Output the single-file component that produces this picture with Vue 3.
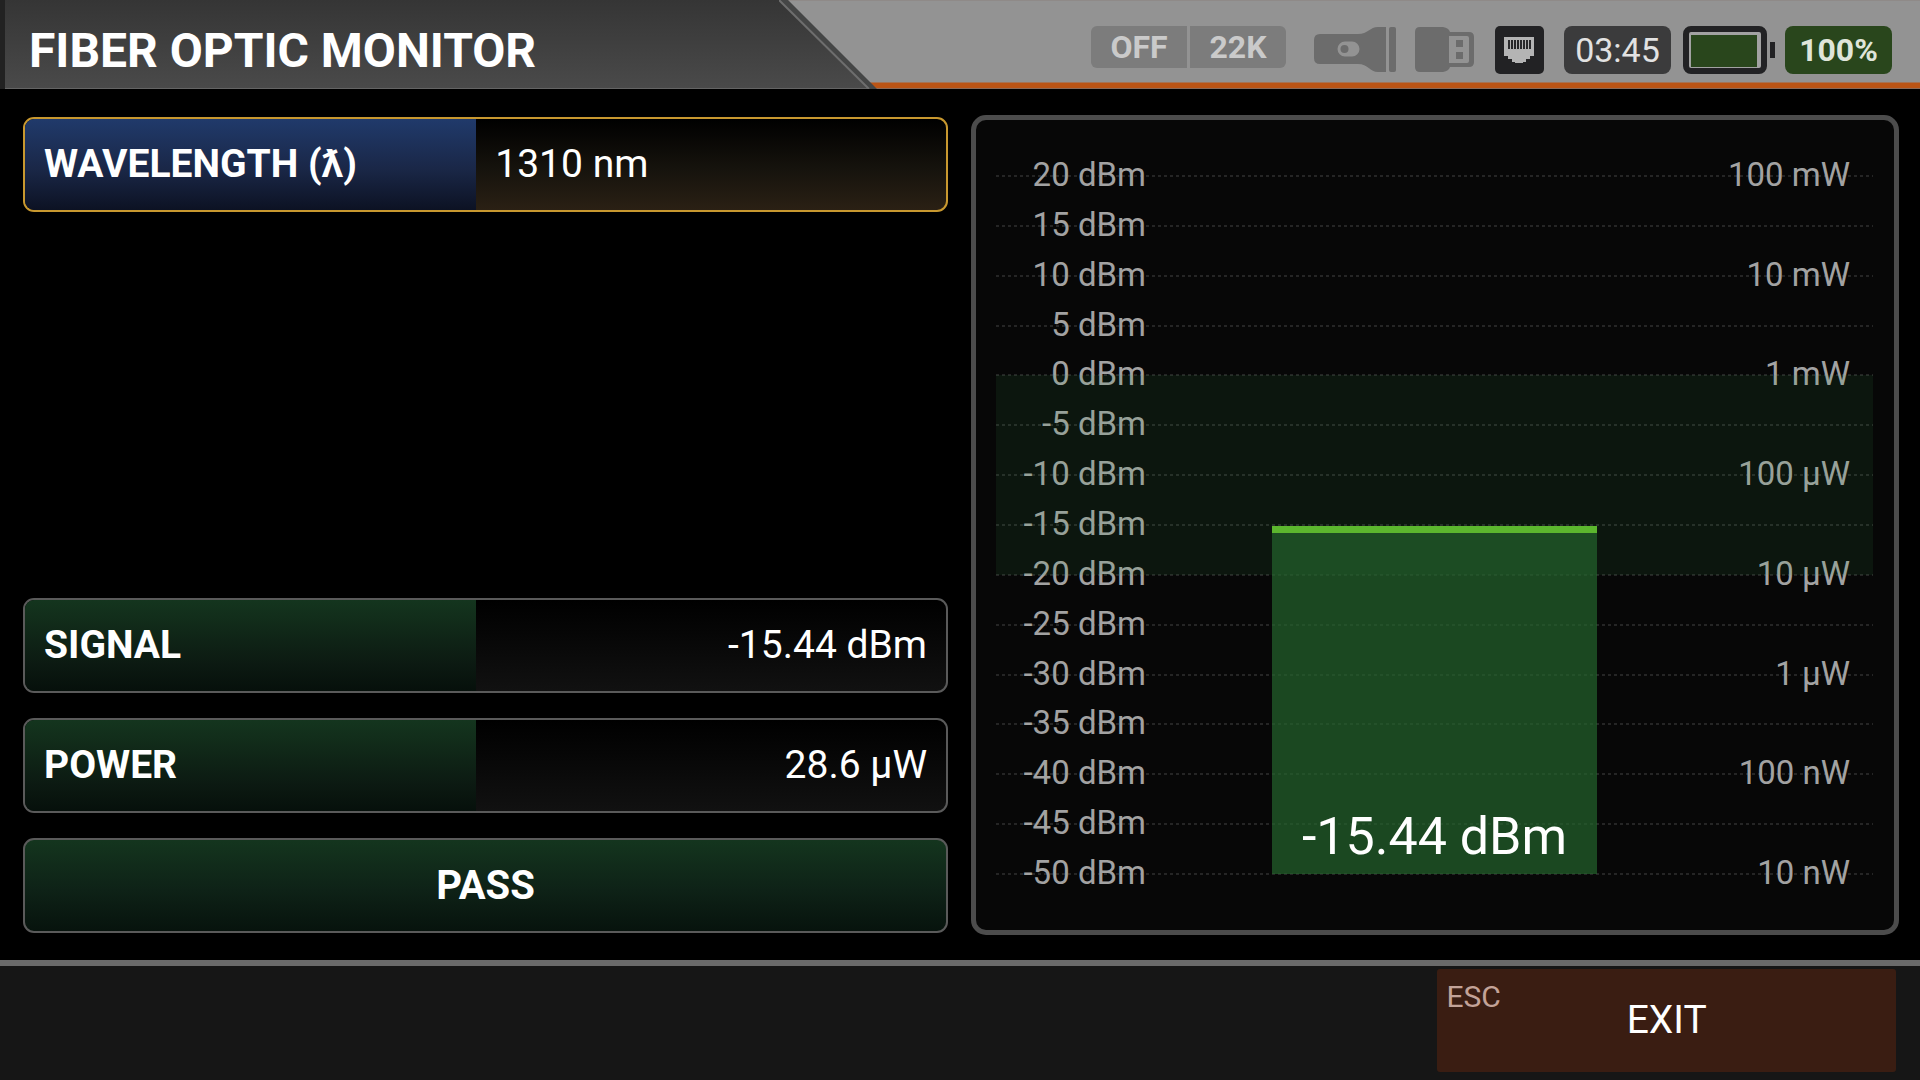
<script setup>
import { ref, computed } from 'vue'

const wavelength = ref('1310 nm')
const signal = -15.44
const signalText = `${signal} dBm`
const powerText = '28.6 µW'

const powerLabels = {
  20: '100 mW',
  10: '10 mW',
  0: '1 mW',
  '-10': '100 µW',
  '-20': '10 µW',
  '-30': '1 µW',
  '-40': '100 nW',
  '-50': '10 nW'
}

const levels = Array.from({ length: 15 }, (_, i) => {
  const dbm = 20 - i * 5
  return { dbm, power: powerLabels[dbm] }
})

// Each level owns one equal row; its value sits on the row's centre line.
const position = (dbm) => (((20 - dbm) / 5 + 0.5) / levels.length) * 100

const bandStyle = computed(() => ({
  top: `${position(0)}%`,
  height: `${position(-20) - position(0)}%`
}))

const barStyle = computed(() => ({
  top: `${position(signal)}%`,
  bottom: `${100 - position(-50)}%`
}))
</script>

<template>
  <div class="screen">
    <header class="topbar">
      <div class="title">
        <h1>FIBER OPTIC MONITOR</h1>
        <svg class="edge" viewBox="0 0 98 89" aria-hidden="true">
          <defs>
            <linearGradient id="edge-fill" x1="0" y1="0" x2="0" y2="1">
              <stop offset="0" stop-color="#353535" />
              <stop offset="1" stop-color="#4a4a4a" />
            </linearGradient>
          </defs>
          <path d="M0 0L91 89H0z" fill="url(#edge-fill)" />
          <path d="M0 88.500H91" stroke="#646464" />
          <path d="M0 0H9L98 89H90z" fill="#454646" />
          <path d="M0 0L90 89" stroke="#6e6e6e" stroke-width="2" />
        </svg>
      </div>
      <div class="status">
        <div class="pills">
          <span>OFF</span>
          <span>22K</span>
        </div>
        <svg class="torch" width="84" height="46" viewBox="0 0 84 46" role="img" aria-label="Flashlight">
          <path fill="#6c6c6c" fill-rule="evenodd" d="M6 8H44C54 8 56 1 64 1H72V46H64C56 46 54 38 44 38H6Q0 38 0 32V14Q0 8 6 8zM31 15.500A7.500 7.500 0 0 0 31 30.500H38A7.500 7.500 0 0 0 38 15.500z" />
          <circle cx="30.500" cy="23" r="4" fill="#6c6c6c" />
          <rect x="75" y="1" width="7" height="45" rx="2" fill="#6c6c6c" />
        </svg>
        <svg class="usb" width="59" height="46" viewBox="0 0 59 46" role="img" aria-label="USB">
          <path fill="#6c6c6c" fill-rule="evenodd" d="M5 0H28Q34 1 35 5H54Q59 5 59 10V35Q59 40 54 40H35Q34 44 28 45H5Q0 45 0 40V5Q0 0 5 0zM34 9V36H52Q54 36 54 34V11Q54 9 52 9z" />
          <path fill="#6c6c6c" d="M41 13h7v7h-7zM41 25h7v7h-7z" />
        </svg>
        <svg class="lan" width="49" height="48" viewBox="0 0 49 48" role="img" aria-label="Ethernet">
          <rect width="49" height="48" rx="5" fill="#222224" />
          <path fill="#b4b4b4" d="M9 11H39V30H35V33H31V36H28V37H20V36H17V33H13V30H9z" />
          <path fill="#29292b" d="M13 14h2v9h-2zM16 14h2v9h-2zM19 14h2v9h-2zM22 14h2v9h-2zM25 14h2v9h-2zM28 14h2v9h-2zM31 14h2v9h-2zM34 14h2v9h-2z" />
        </svg>
        <time class="clock">03:45</time>
        <svg class="battery" width="94" height="48" viewBox="0 0 94 48" role="img" aria-label="Battery full">
          <rect x="3" y="3" width="78" height="42" rx="5" fill="#a2a2a2" stroke="#222224" stroke-width="6" />
          <rect x="8" y="9" width="66" height="32" fill="#29461c" />
          <path fill="#222224" d="M87 16h5v16h-5z" />
        </svg>
        <strong class="charge">100%</strong>
      </div>
    </header>

    <main class="content">
      <section class="readings" aria-label="Readings">
        <div class="field selected">
          <label for="wavelength">WAVELENGTH (ƛ)</label>
          <select id="wavelength" v-model="wavelength">
            <option>1310 nm</option>
          </select>
        </div>
        <div class="results">
          <div class="field">
            <label for="signal">SIGNAL</label>
            <output id="signal">{{ signalText }}</output>
          </div>
          <div class="field">
            <label for="power">POWER</label>
            <output id="power">{{ powerText }}</output>
          </div>
          <div class="field verdict" role="status">PASS</div>
        </div>
      </section>

      <section class="panel" aria-label="Signal level">
        <div class="chart">
          <ul class="levels">
            <li v-for="level in levels" :key="level.dbm">
              <span class="dbm">{{ level.dbm }} dBm</span>
              <span>{{ level.power }}</span>
            </li>
          </ul>
          <div class="band" :style="bandStyle"></div>
          <div class="bar" :style="barStyle">{{ signalText }}</div>
        </div>
      </section>
    </main>

    <footer class="actions">
      <button type="button" class="exit">
        <kbd>ESC</kbd>
        <span>EXIT</span>
      </button>
    </footer>
  </div>
</template>

<style>
body {
  background: #000;
}
</style>

<style scoped>
* {
  box-sizing: border-box;
}

.screen {
  display: flex;
  flex-direction: column;
  min-height: 100vh;
  background: #000;
  color: #fff;
  font-family: Roboto, "Liberation Sans", sans-serif;
}

.topbar {
  display: flex;
  justify-content: space-between;
  background: linear-gradient(#8f8a88 0 1px, #939393 1px 82px, #bb5415 83px 88px, #8a6a58 88px);
}

.title {
  display: flex;
  flex: none;
  width: 45.7%;
  height: 89px;
}

h1 {
  flex: 1;
  margin: 0;
  padding: 0 24px;
  border-left: 5px solid #222;
  box-shadow: inset 0 -1px #646464;
  background: linear-gradient(#353535, #4a4a4a);
  font-size: 48px;
  font-weight: 700;
  line-height: 101px;
  white-space: nowrap;
}

.edge {
  flex: none;
  width: 98px;
  height: 89px;
}

.status {
  display: flex;
  align-items: flex-start;
  padding: 26px 28px 0 0;
}

.pills {
  display: flex;
  gap: 3px;
  margin-right: 28px;
}

.pills span {
  width: 96px;
  padding-top: 1px;
  background: #7c7c7c;
  color: #cacaca;
  font-size: 32px;
  font-weight: 700;
  line-height: 41px;
  text-align: center;
}

.pills span:first-child {
  border-radius: 6px 0 0 6px;
}

.pills span:last-child {
  border-radius: 0 6px 6px 0;
}

.torch {
  margin-right: 17px;
}

.usb {
  margin: 1px 21px 0 0;
}

.lan {
  margin-right: 20px;
}

.clock,
.charge {
  width: 107px;
  border-radius: 8px;
  line-height: 48px;
  text-align: center;
}

.clock {
  margin-right: 12px;
  background: #3b3b3c;
  color: #e2e2e2;
  font-size: 34px;
}

.battery {
  margin-right: 8px;
}

.charge {
  background: #29461c;
  color: #dfe5da;
  font-size: 32px;
}

.content {
  display: grid;
  flex: 1;
  grid-template-columns: 925fr 928fr;
  gap: 23px;
  padding: 26px 21px 25px 23px;
}

.readings {
  display: flex;
  flex-direction: column;
  justify-content: space-between;
  padding: 2px 0;
}

.results {
  display: flex;
  flex-direction: column;
  gap: 25px;
}

.field {
  display: grid;
  grid-template-columns: 49% 1fr;
  height: 95px;
  overflow: hidden;
  border: 2px solid #5a5a5a;
  border-radius: 11px;
  background: linear-gradient(#000, #111);
  font-size: 39px;
  line-height: 91px;
}

.field label {
  padding: 0 19px;
  background: linear-gradient(#14351e, #0c1a12 70%, #06100b);
  font-weight: 700;
  white-space: nowrap;
}

.field output {
  padding: 0 19px;
  text-align: right;
}

.field.selected {
  border-color: #c8982f;
  background: linear-gradient(#000, #16130d 55%, #2a2014);
}

.field.selected label {
  background: linear-gradient(#203a6b, #1a2747 55%, #0c1223);
}

.field select {
  appearance: none;
  margin: 0;
  padding: 0 19px;
  border: 0;
  outline: 0;
  background: none;
  color: inherit;
  font: inherit;
}

.field.verdict {
  display: block;
  background: linear-gradient(#14351e, #0e2217 55%, #07130d);
  font-size: 40px;
  font-weight: 700;
  text-align: center;
}

.panel {
  display: flex;
  padding: 31px 21px 31px 20px;
  border: 5px solid #4c4c4c;
  border-radius: 15px;
  background: #070707;
}

.chart {
  position: relative;
  display: flex;
  flex: 1;
}

.levels {
  display: flex;
  flex: 1;
  flex-direction: column;
  margin: 0;
  padding: 0;
  list-style: none;
  color: #a2a2a2;
  font-size: 33px;
  line-height: 48px;
}

.levels li {
  display: flex;
  flex: 1;
  justify-content: space-between;
  padding-right: 23px;
  background: repeating-linear-gradient(90deg, #252525 0 3px, transparent 3px 6px) 0 50% / 100% 2px no-repeat;
}

.dbm {
  width: 150px;
  text-align: right;
}

.band {
  position: absolute;
  right: 0;
  left: 0;
  background: rgba(60, 160, 80, 0.1);
}

.bar {
  position: absolute;
  right: 31.5%;
  left: 31.5%;
  display: flex;
  align-items: flex-end;
  justify-content: center;
  margin-top: -3px;
  border-top: 7px solid #5cb62e;
  background: rgba(36, 100, 44, 0.7);
  background-clip: padding-box;
  font-size: 52px;
  line-height: 74px;
  white-space: nowrap;
}

.actions {
  display: flex;
  justify-content: flex-end;
  padding: 3px 24px 8px;
  border-top: 6px solid #6a6a6a;
  background: #161616;
}

.exit {
  display: grid;
  grid-template-columns: 1fr auto 1fr;
  width: 24.5%;
  height: 103px;
  padding: 0 9px;
  border: 0;
  border-radius: 3px;
  background: #3a1d12;
  color: #fff;
  font-family: inherit;
  font-size: 39px;
  line-height: 102px;
}

.exit kbd {
  align-self: start;
  color: #c3a398;
  font-family: inherit;
  font-size: 30px;
  line-height: 56px;
  text-align: left;
}
</style>
